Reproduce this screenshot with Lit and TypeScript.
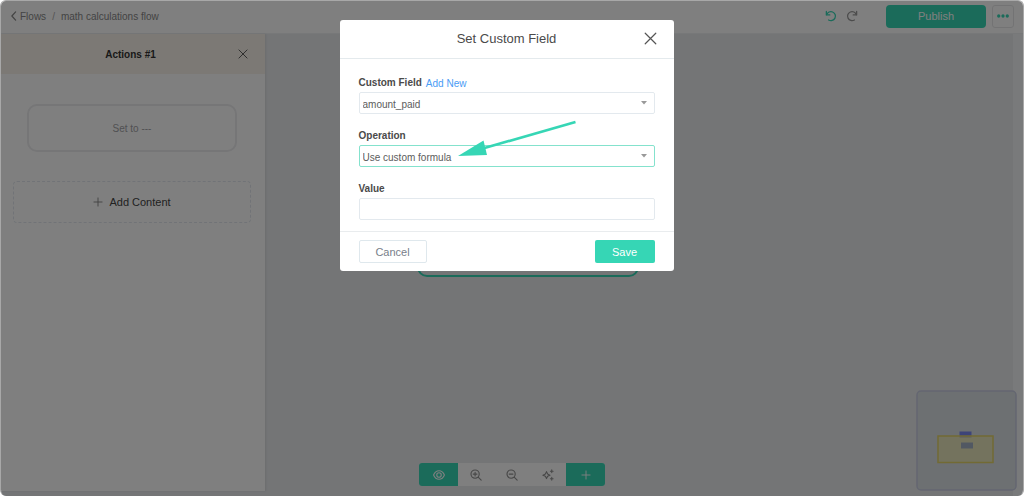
import { LitElement, html, css, svg } from "lit";
import { customElement, state } from "lit/decorators.js";

const icon = (size: number, body: unknown, box = 16) => html`
  <svg width=${size} height=${size} viewBox="0 0 ${box} ${box}" fill="none" stroke="currentColor"
    stroke-width="1.5" stroke-linecap="round" stroke-linejoin="round" aria-hidden="true">${body}</svg>`;

const icons = {
  back: svg`<path stroke-width="2" d="M9 1.500 3 8l6 6.500"/>`,
  close: svg`<path d="M1.500 1.500l13 13M14.500 1.500l-13 13"/>`,
  plus: svg`<path d="M8 1.500v13M1.500 8h13"/>`,
  undo: svg`<g stroke-width="1.700"><path d="M1.800 2v4.600h4.600"/><path d="M2.200 6.300a6 6 0 1 1 2.600 7"/></g>`,
  redo: svg`<g stroke-width="1.700"><path d="M14.200 2v4.600H9.600"/><path d="M13.800 6.300a6 6 0 1 0-2.600 7"/></g>`,
  dots: svg`<g fill="currentColor" stroke="none"><circle cx="2.300" cy="8" r="2.200"/><circle cx="8" cy="8" r="2.200"/><circle cx="13.700" cy="8" r="2.200"/></g>`,
  eye: svg`<path d="M.8 8c3-7.600 11.400-7.600 14.400 0-3 7.600-11.400 7.600-14.400 0z"/><circle cx="8" cy="8" r="3"/>`,
  zoomIn: svg`<circle cx="6.800" cy="6.800" r="5.500"/><path d="m10.900 10.900 4 4M6.800 4.300v5M4.300 6.800h5"/>`,
  zoomOut: svg`<circle cx="6.800" cy="6.800" r="5.500"/><path d="m10.900 10.900 4 4M4.300 6.800h5"/>`,
  sparkle: svg`<path d="M6 3.500 7.500 6.700 10.600 8.200 7.500 9.700 6 12.800 4.500 9.700 1.200 8.200 4.500 6.700z"/><path d="M13 1.200v3.600M11.200 3h3.600M13 11.200v3.600M11.200 13h3.600"/>`,
};

@customElement("flow-sidebar")
export class FlowSidebar extends LitElement {
  static styles = css`
    :host { display: flex; flex-direction: column; background: #fff; box-shadow: 1px 0 2px rgba(0, 0, 0, 0.08); }
    * { box-sizing: border-box; }
    .head {
      display: grid; grid-template-columns: 1fr auto 1fr; align-items: center;
      height: 40px; padding: 0 17px 0 12px; background: #f8f3ea;
    }
    .title { grid-column: 2; margin: 0; font-size: 10px; font-weight: 700; color: #333; }
    button { font: inherit; cursor: pointer; }
    .close { justify-self: end; display: flex; padding: 0; border: 0; background: none; color: #555; }
    .body { display: flex; flex-direction: column; gap: 29px; padding: 30px 14px 0 12px; }
    .step {
      height: 48px; margin: 0 14px; border: 2px solid #ececee; border-radius: 10px;
      background: none; color: #a2a2a6; font-size: 10px;
    }
    .add {
      display: flex; align-items: center; justify-content: center; gap: 6px; height: 42px;
      border: 1px dashed #e2e7ee; border-radius: 4px; background: none; color: #444; font-size: 11px;
    }
    .add svg { color: #888; }
  `;

  render() {
    return html`
      <header class="head">
        <h2 class="title">Actions #1</h2>
        <button class="close" aria-label="Close panel">${icon(10, icons.close)}</button>
      </header>
      <div class="body">
        <button class="step">Set to ---</button>
        <button class="add">${icon(10, icons.plus)}<span>Add Content</span></button>
      </div>`;
  }
}

@customElement("field-dialog")
export class FieldDialog extends LitElement {
  static styles = css`
    :host { display: block; background: #fff; border-radius: 3px; color: #4f4f4f; font-size: 10px; }
    * { box-sizing: border-box; }
    .head {
      display: grid; grid-template-columns: 1fr auto 1fr; align-items: center;
      height: 39px; padding: 0 17px 1px; border-bottom: 1px solid #e4eaed;
    }
    .title { grid-column: 2; margin: 0; font-size: 13px; font-weight: 400; color: #4a4a4a; }
    button { font: inherit; cursor: pointer; }
    .close { justify-self: end; display: flex; padding: 0; border: 0; background: none; color: #555; }
    .form { display: flex; flex-direction: column; gap: 15px; padding: 17px 19px 11px; }
    .field { display: flex; flex-direction: column; gap: 2px; }
    .caption { display: flex; gap: 4px; height: 14px; line-height: 14px; }
    label { font-weight: 700; color: #4a4a4a; }
    a { color: #4a9cf5; text-decoration: none; line-height: 16px; }
    .pick { display: grid; align-items: center; }
    .pick > * { grid-area: 1 / 1; }
    .caret { justify-self: end; margin-right: 8px; fill: #999; pointer-events: none; }
    select, input {
      width: 100%; height: 22px; padding: 2px 3px 0; border: 1px solid #e3e9ee; border-radius: 2px;
      background: #fff; color: #5c5c5c; font: inherit; appearance: none; outline: none;
    }
    .active { border-color: #84e2cd; }
    .foot { display: flex; justify-content: space-between; padding: 8px 19px; border-top: 1px solid #e9ecee; font-size: 11px; }
    .cancel, .save { height: 23px; border-radius: 2px; }
    .cancel { width: 68px; border: 1px solid #dfe8ed; background: #fff; color: #78808a; }
    .save { width: 60px; border: 0; background: #36d6b5; color: #fff; }
  `;

  @state() private operation = "Use custom formula";

  private caret() {
    return html`<svg class="caret" width="6" height="4" viewBox="0 0 6 4" aria-hidden="true"><path d="M0 0h6L3 3.500z"/></svg>`;
  }

  render() {
    return html`
      <header class="head">
        <h1 class="title">Set Custom Field</h1>
        <button class="close" aria-label="Close">${icon(13, icons.close)}</button>
      </header>
      <form class="form">
        <div class="field">
          <div class="caption"><label for="custom">Custom Field</label><a href="#new">Add New</a></div>
          <div class="pick">
            <select id="custom"><option>amount_paid</option></select>${this.caret()}
          </div>
        </div>
        <div class="field">
          <div class="caption"><label for="operation">Operation</label></div>
          <div class="pick">
            <select id="operation" class="active"><option>${this.operation}</option></select>${this.caret()}
          </div>
        </div>
        <div class="field">
          <div class="caption"><label for="value">Value</label></div>
          <input id="value" type="text" />
        </div>
      </form>
      <footer class="foot">
        <button class="cancel">Cancel</button>
        <button class="save">Save</button>
      </footer>`;
  }
}

@customElement("app-root")
export class AppRoot extends LitElement {
  static styles = css`
    :host { display: block; height: 100vh; background: #fff; font: 10px "Liberation Sans", Arial, sans-serif; }
    * { box-sizing: border-box; }
    .frame {
      position: relative; display: flex; flex-direction: column; height: 100%; overflow: hidden;
      border: solid #a8a8a8; border-width: 1px 1px 0; border-radius: 6px; background: #e8eaed;
    }
    .bar {
      display: flex; align-items: center; justify-content: space-between; height: 33px;
      padding: 0 9px 2px; border-bottom: 1px solid #eef0f3; background: #fff; color: #888;
    }
    .crumbs, .tools { display: flex; align-items: center; }
    .crumbs { gap: 6px; }
    .crumbs a { display: flex; align-items: center; color: inherit; text-decoration: none; }
    .slash { color: #aaa; }
    button { font: inherit; cursor: pointer; }
    .tools { gap: 6px; }
    .history { display: flex; gap: 9px; margin-right: 22px; }
    .history button { display: flex; padding: 0; border: 0; background: none; color: #999; }
    .history .on { color: #36d6b5; }
    .publish {
      width: 100px; height: 23px; border: 0; border-radius: 4px;
      background: #36d6b5; color: #fff; font-size: 11px;
    }
    .more {
      display: flex; align-items: center; justify-content: center; width: 22px; height: 23px; padding: 0;
      border: 1px solid #e6e7e9; border-radius: 3px; background: none; color: #36d6b5;
    }
    .work { position: relative; flex: 1; display: flex; min-height: 0; }
    flow-sidebar { width: 264px; margin-bottom: 5px; }
    .canvas { position: relative; flex: 1; }
    .gutter { width: 10px; background: #f3f4f6; }
    .node {
      position: absolute; top: 174px; left: 152px; width: 222px; height: 69px;
      border: 2px solid #36d6b5; border-radius: 10px; background: #e8eaed;
    }
    .map { position: absolute; right: 6px; bottom: 5px; width: 101px; height: 101px; }
    .dock { position: absolute; left: 0; right: 0; bottom: 10px; display: flex; justify-content: center; }
    .group { display: flex; border-radius: 3px; overflow: hidden; background: #fff; }
    .group button {
      display: flex; align-items: center; justify-content: center; width: 36px; height: 23px;
      padding: 0; border: 0; background: #fff; color: #909090;
    }
    .group .solid { width: 39px; background: #36d6b5; color: #fff; }
    .shade {
      position: absolute; inset: 0; display: flex; justify-content: center; align-items: flex-start;
      padding: 19px 11px 0 0; background: rgba(0, 0, 0, 0.5);
    }
    .stage { position: relative; width: 334px; }
    .arrow { position: absolute; left: 117px; top: 99px; pointer-events: none; }
  `;

  render() {
    return html`
      <div class="frame">
        <header class="bar">
          <nav class="crumbs">
            <a href="#flows">${icon(10, icons.back)}<span>Flows</span></a>
            <span class="slash">/</span><span>math calculations flow</span>
          </nav>
          <div class="tools">
            <div class="history">
              <button class="on" aria-label="Undo">${icon(12, icons.undo)}</button>
              <button aria-label="Redo">${icon(12, icons.redo)}</button>
            </div>
            <button class="publish">Publish</button>
            <button class="more" aria-label="More">${icon(12, icons.dots)}</button>
          </div>
        </header>
        <div class="work">
          <flow-sidebar></flow-sidebar>
          <main class="canvas"><div class="node"></div></main>
          <div class="gutter"></div>
          <svg class="map" viewBox="0 0 101 101" aria-hidden="true">
            <rect x="1" y="1" width="99" height="99" rx="4" fill="#dae1e4" stroke="#c8cce2" stroke-width="1.500"/>
            <rect x="43.500" y="41.500" width="12" height="6" fill="#7a88f0"/>
            <rect x="22" y="46" width="55" height="26.500" fill="#f5ee96" fill-opacity=".5" stroke="#e4d468" stroke-width="1.500"/>
            <rect x="45" y="52.500" width="12" height="6" fill="#a3b1c4"/>
          </svg>
          <div class="dock">
            <div class="group">
              <button class="solid" aria-label="Preview">${icon(12, icons.eye)}</button>
              <button aria-label="Zoom in">${icon(12, icons.zoomIn)}</button>
              <button aria-label="Zoom out">${icon(12, icons.zoomOut)}</button>
              <button aria-label="Arrange">${icon(12, icons.sparkle)}</button>
              <button class="solid" aria-label="Add">${icon(10, icons.plus)}</button>
            </div>
          </div>
        </div>
        <div class="shade">
          <div class="stage">
            <field-dialog role="dialog" aria-modal="true"></field-dialog>
            <svg class="arrow" width="121" height="40" viewBox="0 0 121 40" aria-hidden="true">
              <path d="M24 30 118.500 3" stroke="#36d6b5" stroke-width="2.600"/>
              <path d="M1 37 26.500 21.500 30 36z" fill="#36d6b5"/>
            </svg>
          </div>
        </div>
      </div>`;
  }
}
